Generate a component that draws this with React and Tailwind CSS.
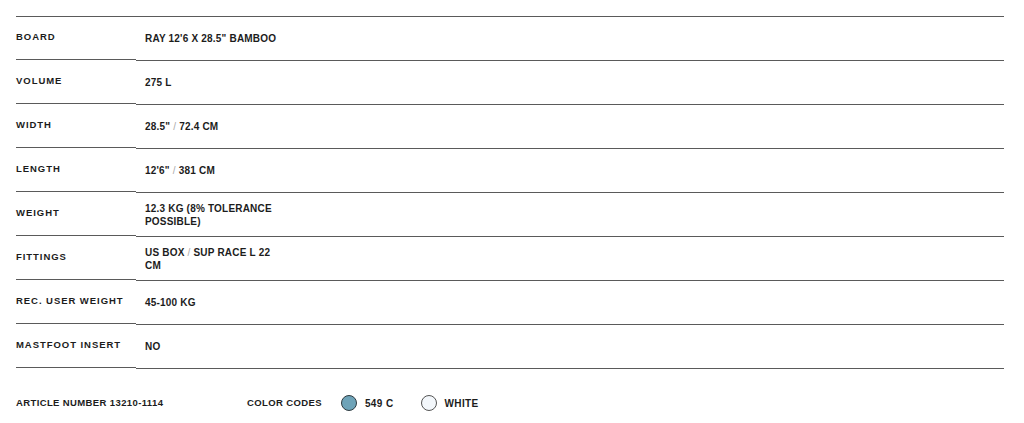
import { Fragment } from "react";

const specs = [
  { label: "Board", value: ["Ray 12'6 x 28.5\" Bamboo"] },
  { label: "Volume", value: ["275 L"] },
  { label: "Width", value: ["28.5\"", "72.4 cm"] },
  { label: "Length", value: ["12'6\"", "381 cm"] },
  { label: "Weight", value: ["12.3 kg (8% tolerance possible)"] },
  { label: "Fittings", value: ["US Box", "SUP Race L 22 cm"] },
  { label: "Rec. user weight", value: ["45-100 kg"] },
  { label: "Mastfoot insert", value: ["No"] },
];

function SpecRow({ label, value }) {
  return (
    <div className="flex h-[44px]">
      {/* label cell ends one pixel above the value cell */}
      <div className="w-[120px] h-[43px] border-b-[1.5px] border-[#5a5a5a] flex items-center pb-[2px] text-[9.5px] tracking-[0.1em]">
        {label}
      </div>
      <div className="flex-1 h-[44px] border-b-[1.5px] border-[#5a5a5a] flex items-center pl-[9px] text-[10px] tracking-[0.02em]">
        <p className="max-w-[135px] leading-[13px]">
          {value.map((part, i) => (
            <Fragment key={i}>
              {i > 0 && <span className="text-[#aaa] font-normal"> / </span>}
              {part}
            </Fragment>
          ))}
        </p>
      </div>
    </div>
  );
}

export default function App() {
  return (
    <div
      className="bg-white w-[1024px] h-[423px] pl-4 pr-5 pt-4 text-[#1c1c1c] font-bold uppercase"
      style={{ fontFamily: '"Liberation Sans", Arial, sans-serif' }}
    >
      <div className="border-t-[1.5px] border-[#5a5a5a]">
        {specs.map((s) => (
          <SpecRow key={s.label} label={s.label} value={s.value} />
        ))}
      </div>

      <div className="flex items-center mt-[26px] text-[9.5px] tracking-[0.04em]">
        <span className="w-[231px]">Article number 13210-1114</span>
        <span className="mr-[19px]">Color codes</span>
        <span className="w-4 h-4 rounded-full bg-[#6ea3b8] border border-[#2f3b40]" />
        <span className="ml-2 mr-[27px] text-[10px]">549 C</span>
        <span className="w-4 h-4 rounded-full bg-[#f3f7fb] border border-[#555]" />
        <span className="ml-2 text-[10px]">White</span>
      </div>
    </div>
  );
}
